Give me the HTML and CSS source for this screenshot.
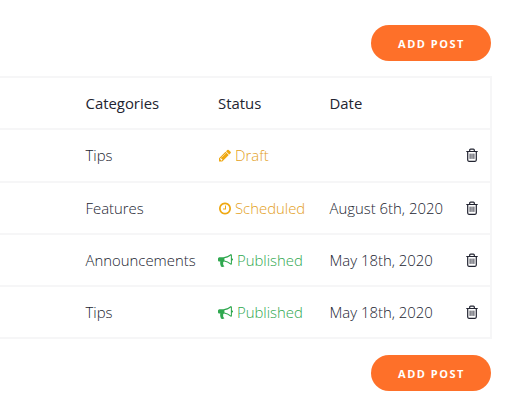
FILE: index.html
```
<!DOCTYPE html>
<html lang="en">
<head>
    <meta charset="UTF-8">
    <meta name="viewport" content="width=device-width, initial-scale=1.0">
    <title>Posts</title>
    <link rel="stylesheet" href="styles.css">
</head>
<body>
    <svg class="sprite">
        <symbol id="pencil" viewBox="0 0 1792 1792">
            <path d="M491 1536l91-91-235-235-91 91v107h128v128h107zm523-928q0-22-22-22-10 0-17 7l-542 542q-7 7-7 17 0 22 22 22 10 0 17-7l542-542q7-7 7-17zm-54-192l416 416-832 832h-416v-416zm683 96q0 53-37 90l-166 166-416-416 166-165q36-38 90-38 53 0 91 38l235 234q37 39 37 91z"/>
        </symbol>
        <symbol id="clock" viewBox="0 0 1792 1792">
            <path d="M1024 544v448q0 14-9 23t-23 9h-320q-14 0-23-9t-9-23v-64q0-14 9-23t23-9h224v-352q0-14 9-23t23-9h64q14 0 23 9t9 23zm416 352q0-148-73-273t-198-198-273-73-273 73-198 198-73 273 73 273 198 198 273 73 273-73 198-198 73-273zm224 0q0 209-103 385.500t-279.500 279.500-385.500 103-385.500-103-279.500-279.500-103-385.500 103-385.500 279.500-279.500 385.500-103 385.500 103 279.500 279.500 103 385.500z"/>
        </symbol>
        <symbol id="bullhorn" viewBox="0 0 1792 1792">
            <path d="M1664 640q53 0 90.500 37.500t37.500 90.500-37.500 90.500-90.500 37.500v384q0 52-38 90t-90 38q-417-347-812-380-58 19-91 66t-31 100.500 40 92.500q-20 33-23 65.500t6 58 33.500 55 48 50 61.500 50.500q-29 58-111.500 83t-168.500 11.500-132-55.500q-7-23-29.500-87.500t-32-94.500-23-89-15-101 3.500-98.500 22-110.500h-122q-66 0-113-47t-47-113v-192q0-66 47-113t113-47h480q435 0 896-384 52 0 90 38t38 90v384zm-128 604v-954q-394 302-768 343v270q377 42 768 341z"/>
        </symbol>
        <symbol id="trash" viewBox="0 0 12 14">
            <path d="M.3 3.500h11.400M3.700 3.500V2q0-.9.900-.9h2.800q.9 0 .9.900v1.500M1.700 3.500v8.600q0 1.200 1.200 1.200h6.200q1.200 0 1.200-1.200V3.500" fill="none" stroke="currentColor" stroke-width="1.200"/>
            <path d="M4.100 5.600v5.300M6 5.600v5.300M7.900 5.600v5.300" fill="none" stroke="currentColor" stroke-width=".9"/>
        </symbol>
    </svg>

    <div class="actions">
        <button class="add-btn">ADD POST</button>
    </div>

    <table class="posts">
        <thead>
            <tr>
                <th class="category">Categories</th>
                <th class="status">Status</th>
                <th class="date">Date</th>
                <th class="remove"></th>
            </tr>
        </thead>
        <tbody>
            <tr>
                <td class="category">Tips</td>
                <td class="draft"><svg class="icon"><use href="#pencil"/></svg>Draft</td>
                <td></td>
                <td><svg class="trash"><use href="#trash"/></svg></td>
            </tr>
            <tr>
                <td class="category">Features</td>
                <td class="scheduled"><svg class="icon"><use href="#clock"/></svg>Scheduled</td>
                <td>August 6th, 2020</td>
                <td><svg class="trash"><use href="#trash"/></svg></td>
            </tr>
            <tr>
                <td class="category">Announcements</td>
                <td class="published"><svg class="icon"><use href="#bullhorn"/></svg>Published</td>
                <td>May 18th, 2020</td>
                <td><svg class="trash"><use href="#trash"/></svg></td>
            </tr>
            <tr>
                <td class="category">Tips</td>
                <td class="published"><svg class="icon"><use href="#bullhorn"/></svg>Published</td>
                <td>May 18th, 2020</td>
                <td><svg class="trash"><use href="#trash"/></svg></td>
            </tr>
        </tbody>
    </table>

    <div class="actions">
        <button class="add-btn">ADD POST</button>
    </div>
</body>
</html>
```
FILE: styles.css
```
body {
    font-family: "Open Sans", sans-serif;
    font-size: 14.9px;
    font-weight: 300;
    margin: 0;
    padding-top: 25px;
    background: #fff;
    color: #222431;
}
.sprite {
    display: none;
}
.actions {
    display: flex;
    justify-content: flex-end;
    padding-right: 27px;
}
.add-btn {
    width: 120px;
    height: 36px;
    padding: 0 0 0 1px;
    background: #fe7029;
    color: #fff;
    border: none;
    border-radius: 18px;
    font-family: inherit;
    font-size: 11px;
    font-weight: 700;
    letter-spacing: 1.5px;
    cursor: pointer;
}
.posts {
    width: 492px;
    margin: 15px 0 16px;
    table-layout: fixed;
    border-collapse: separate;
    border-spacing: 0;
    border-top: 2px solid #f6f6f7;
    border-right: 2px solid #f6f6f7;
}
th, td {
    height: 50.3px;
    padding: 0;
    border-bottom: 2px solid #f6f6f7;
    text-align: left;
    white-space: nowrap;
}
th {
    font-weight: 400;
}
.posts .category {
    padding-left: 85.5px;
}
th.category {
    width: 132.5px;
}
th.status {
    width: 111.5px;
}
th.date {
    width: 136.5px;
}
.icon {
    width: 14px;
    height: 15px;
    margin-right: 3px;
    vertical-align: -2px;
    fill: currentColor;
}
.draft, .scheduled {
    color: #e3a023;
}
.draft .icon, .scheduled .icon {
    fill: #efa812;
}
.published {
    color: #2fa84f;
}
.published .icon {
    width: 15px;
    margin-right: 4px;
}
.trash {
    display: block;
    width: 12px;
    height: 14px;
}
```
